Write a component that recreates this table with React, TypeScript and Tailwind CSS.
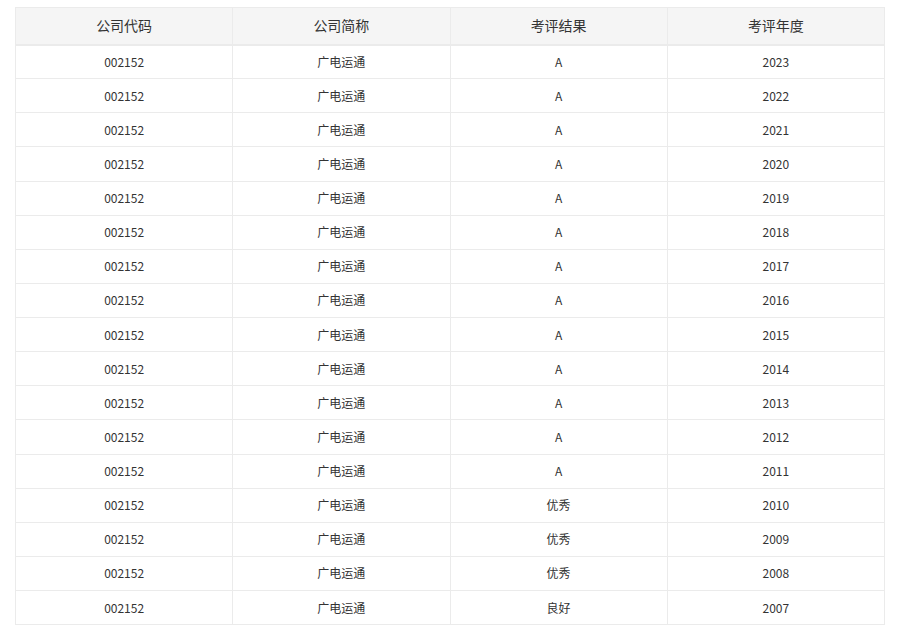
const years = [2023, 2022, 2021, 2020, 2019, 2018, 2017, 2016, 2015, 2014, 2013, 2012, 2011, 2010, 2009, 2008, 2007]

function resultFor(year: number) {
  if (year >= 2011) return 'A'
  if (year >= 2008) return '优秀'
  return '良好'
}

const rows = years.map((year) => ({
  code: '002152',
  name: '广电运通',
  result: resultFor(year),
  year: String(year),
}))

const headers = ['公司代码', '公司简称', '考评结果', '考评年度']

export default function App() {
  return (
    <div
      className="bg-white px-[15px] pt-[7px] text-[#333]"
      style={{fontFamily: '"Noto Sans CJK SC", "Noto Sans", sans-serif'}}
    >
      <table className="w-[870px] table-fixed border-collapse border border-[#ebebeb]">
        <thead>
          <tr className="h-[37px] bg-[#f5f5f5]">
            {headers.map((h) => (
              <th
                key={h}
                className="border border-[#ebebeb] border-b-2 text-center text-[14px] font-normal text-[#333]"
              >
                {h}
              </th>
            ))}
          </tr>
        </thead>
        <tbody>
          {rows.map((r) => (
            <tr key={r.year} className="h-[34.125px]">
              <td className="border border-[#ebebeb] text-center text-[12px]">{r.code}</td>
              <td className="border border-[#ebebeb] text-center text-[12px]">{r.name}</td>
              <td className="border border-[#ebebeb] text-center text-[12px]">{r.result}</td>
              <td className="border border-[#ebebeb] text-center text-[12px]">{r.year}</td>
            </tr>
          ))}
        </tbody>
      </table>
    </div>
  )
}
